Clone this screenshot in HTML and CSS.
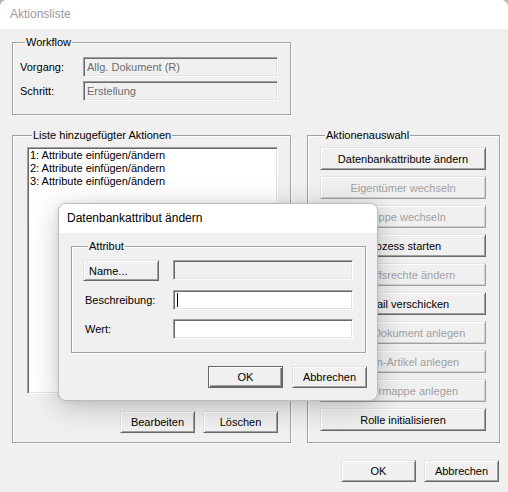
FILE: index.html
```html
<!DOCTYPE html>
<html lang="de">
<head>
<meta charset="utf-8">
<title>Aktionsliste</title>
<link rel="stylesheet" href="styles.css">
</head>
<body>
<div class="window">
  <div class="titlebar">Aktionsliste</div>
  <div class="client">
    <div class="group workflow">
      <div class="legend">Workflow</div>
      <div class="row"><span class="lbl">Vorgang:</span><div class="edit disabled">Allg. Dokument (R)</div></div>
      <div class="row"><span class="lbl">Schritt:</span><div class="edit disabled">Erstellung</div></div>
    </div>
    <div class="columns">
      <div class="group list-group">
        <div class="legend">Liste hinzugefügter Aktionen</div>
        <div class="listbox">
          <div class="item">1: Attribute einfügen/ändern</div>
          <div class="item">2: Attribute einfügen/ändern</div>
          <div class="item">3: Attribute einfügen/ändern</div>
        </div>
        <div class="btn-row list-buttons">
          <div class="btn">Bearbeiten</div>
          <div class="btn">Löschen</div>
        </div>
      </div>
      <div class="group actions-group">
        <div class="legend">Aktionenauswahl</div>
        <div class="action-list">
          <div class="btn wide">Datenbankattribute ändern</div>
          <div class="btn wide off">Eigentümer wechseln</div>
          <div class="btn wide off">Gruppe wechseln</div>
          <div class="btn wide">Prozess starten</div>
          <div class="btn wide off">Zugriffsrechte ändern</div>
          <div class="btn wide">E-Mail verschicken</div>
          <div class="btn wide off">Office-Dokument anlegen</div>
          <div class="btn wide off">Wissen-Artikel anlegen</div>
          <div class="btn wide off">Ordnermappe anlegen</div>
          <div class="btn wide">Rolle initialisieren</div>
        </div>
      </div>
    </div>
    <div class="btn-row footer">
      <div class="btn">OK</div>
      <div class="btn">Abbrechen</div>
    </div>
  </div>

  <div class="dialog">
    <div class="dlg-title">Datenbankattribut ändern</div>
    <div class="dlg-body">
      <div class="group attr-group">
        <div class="legend">Attribut</div>
        <div class="attr-grid">
          <div class="btn name-btn">Name...</div>
          <div class="edit disabled wide-edit"></div>
          <span class="lbl2">Beschreibung:</span>
          <div class="edit wide-edit"><span class="caret"></span></div>
          <span class="lbl2">Wert:</span>
          <div class="edit wide-edit"></div>
        </div>
      </div>
      <div class="btn-row dlg-buttons">
        <div class="btn default">OK</div>
        <div class="btn">Abbrechen</div>
      </div>
    </div>
  </div>
</div>
</body>
</html>
```
FILE: styles.css
```css
html, body {
  margin: 0;
  padding: 0;
  background: #b4b4b4;
}

.window {
  position: relative;
  width: 508px;
  height: 492px;
  background: #f0f0f0;
  border-radius: 7px 7px 0 0;
  overflow: hidden;
  font-family: "Liberation Sans", Arial, sans-serif;
  font-size: 11px;
  color: #000;
}

.titlebar {
  height: 29px;
  line-height: 29px;
  padding-left: 10px;
  background: #fff;
  font-size: 12px;
  color: #9b9b9b;
}

.client {
  padding: 13px 9px 0 12px;
}

/* etched group box */
.group {
  box-sizing: border-box;
  border: 1px solid #a0a0a0;
  box-shadow: inset 1px 1px 0 #fff, 1px 1px 0 #fff;
}

.legend {
  width: max-content;
  height: 13px;
  line-height: 13px;
  margin: -7px 0 0 5px;
  padding: 0 1px;
  background: #f0f0f0;
}

.workflow {
  width: 279px;
  padding: 0 12px 13px 7px;
}

.workflow .legend {
  margin-bottom: 8px;
}

.row {
  display: flex;
  align-items: center;
  height: 20px;
}

.row + .row {
  margin-top: 4px;
}

.lbl {
  width: 63px;
}

/* sunken edit */
.edit {
  box-sizing: border-box;
  width: 195px;
  height: 20px;
  line-height: 18px;
  padding-left: 3px;
  background: #fff;
  border: 1px solid;
  border-color: #a0a0a0 #fff #fff #a0a0a0;
  box-shadow: inset 1px 1px 0 #696969, inset -1px -1px 0 #e3e3e3;
  white-space: nowrap;
  overflow: hidden;
}

.edit.disabled {
  background: #f0f0f0;
  color: #6d6d6d;
}

.columns {
  display: flex;
  gap: 16px;
  margin-top: 20px;
}

.list-group {
  width: 279px;
  height: 308px;
  padding: 0 12px 9px 14px;
}

.list-group .legend,
.actions-group .legend {
  margin-bottom: 5px;
}

.listbox {
  box-sizing: border-box;
  width: 251px;
  height: 247px;
  padding: 1px 0 0 1px;
  background: #fff;
  border: 1px solid;
  border-color: #a0a0a0 #fff #fff #a0a0a0;
  box-shadow: inset 1px 1px 0 #696969, inset -1px -1px 0 #e3e3e3;
  line-height: 13px;
}

.item {
  padding-left: 1px;
  white-space: nowrap;
}

.btn-row {
  display: flex;
  justify-content: flex-end;
  gap: 8px;
}

.list-buttons {
  margin-top: 17px;
}

/* raised push button */
.btn {
  box-sizing: border-box;
  width: 75px;
  height: 22px;
  display: flex;
  align-items: center;
  justify-content: center;
  background: #f0f0f0;
  border: 1px solid;
  border-color: #e3e3e3 #696969 #696969 #e3e3e3;
  box-shadow: inset 1px 1px 0 #fff, inset -1px -1px 0 #a0a0a0;
  white-space: nowrap;
}

.btn.off {
  color: #a0a0a0;
  border-color: #e3e3e3 #a0a0a0 #a0a0a0 #e3e3e3;
  box-shadow: inset 1px 1px 0 #fff, inset -1px -1px 0 #d0d0d0;
}

.btn.default {
  border-color: #646464;
  box-shadow: inset 1px 1px 0 #fff, inset -1px -1px 0 #696969, inset -2px -2px 0 #a0a0a0;
}

.actions-group {
  width: 193px;
  height: 308px;
  padding: 0 13px 0 12px;
}

.action-list {
  display: flex;
  flex-direction: column;
  gap: 6px;
}

.btn.wide {
  width: 166px;
  height: 23px;
}

.footer {
  margin-top: 17px;
}

/* modal dialog */
.dialog {
  position: absolute;
  left: 58px;
  top: 203px;
  box-sizing: border-box;
  width: 320px;
  height: 198px;
  background: #f0f0f0;
  border: 1px solid #bcbcbc;
  border-radius: 8px;
  overflow: hidden;
  box-shadow: 0 6px 28px rgba(0, 0, 0, 0.22), 0 0 6px rgba(0, 0, 0, 0.08);
}

.dlg-title {
  height: 29px;
  line-height: 29px;
  padding-left: 8px;
  background: #fff;
  font-size: 12px;
  color: #000;
}

.dlg-body {
  padding: 13px 10px 0 12px;
}

.attr-group {
  width: 295px;
  padding: 0 12px 13px 11px;
}

.attr-group .legend {
  margin-bottom: 7px;
}

.attr-grid {
  display: grid;
  grid-template-columns: 90px 180px;
  grid-template-rows: 21px 20px 20px;
  row-gap: 9px;
  align-items: center;
}

.name-btn {
  width: 76px;
  height: 21px;
  justify-content: flex-start;
  padding-left: 5px;
}

.wide-edit {
  width: 180px;
  align-self: start;
}

.lbl2 {
  padding-left: 2px;
}

.caret {
  display: inline-block;
  width: 0;
  height: 14px;
  margin-top: 2px;
  vertical-align: top;
  border-left: 1px solid #000;
}

.dlg-buttons {
  margin-top: 13px;
  gap: 9px;
}
```
